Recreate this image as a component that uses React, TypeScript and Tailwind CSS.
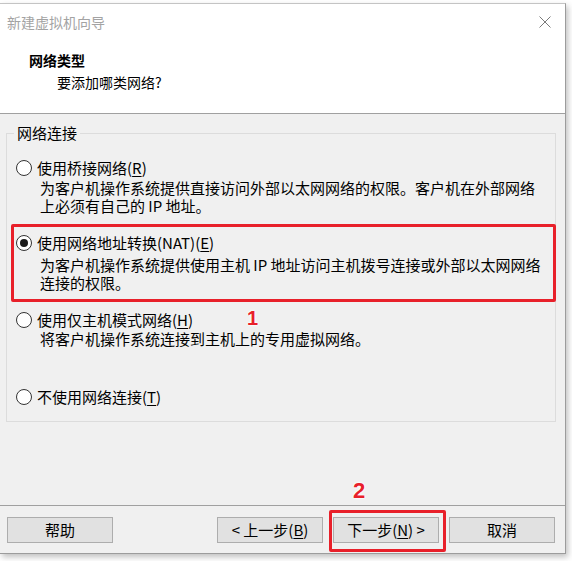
import React from "react";

const font = "font-['Microsoft_YaHei','Noto_Sans_CJK_SC',sans-serif]";

function Radio({ checked }: { checked?: boolean }) {
  return (
    <span className="flex h-4 w-4 shrink-0 items-center justify-center rounded-full border border-[#333333] bg-white">
      {checked && <span className="h-[8px] w-[8px] rounded-full bg-[#1a1a1a]" />}
    </span>
  );
}

function Option({
  checked,
  label,
  mn,
  suffix,
  className,
}: {
  checked?: boolean;
  label: string;
  mn: string;
  suffix?: string;
  className?: string;
}) {
  return (
    <div className={`flex h-[20px] items-center pl-[9px] ${className ?? ""}`}>
      <Radio checked={checked} />
      <span className="ml-[5px] text-[15px] leading-[20px] whitespace-nowrap text-black">
        {label}(<span className="underline underline-offset-2">{mn}</span>){suffix}
      </span>
    </div>
  );
}

function Btn({ children }: { children: React.ReactNode }) {
  return (
    <div className="flex h-[26px] w-[106px] items-center justify-center border border-[#adadad] bg-[#e1e1e1] text-[15px] leading-[20px] text-black whitespace-nowrap">
      {children}
    </div>
  );
}

export default function App() {
  return (
    <div className={`h-[561px] w-[572px] overflow-hidden bg-white pt-[3px] ${font}`}>
      <div className="relative flex h-[551px] w-[566px] flex-col border-t border-r border-b border-t-[#c4c4c4] border-r-[#9c9c9c] border-b-[#9c9c9c] bg-[#f0f0f0] shadow-[2px_3px_6px_rgba(0,0,0,0.25)]">
        {/* Header */}
        <div className="h-[110px] shrink-0 border-b border-[#a0a0a0] bg-white">
          <div className="flex h-[36px] items-center justify-between pl-[7px] pr-[14px]">
            <span className="text-[14px] leading-[20px] text-[#a3a3a3]">新建虚拟机向导</span>
            <svg width="12" height="12" viewBox="0 0 12 12" className="mr-0">
              <path d="M0.5 0.5 L11.5 11.5 M11.5 0.5 L0.5 11.5" stroke="#7a7a7a" strokeWidth="1" />
            </svg>
          </div>
          <div className="mt-[10px] pl-[29px] text-[14px] font-bold leading-[20px] text-black">网络类型</div>
          <div className="mt-[2px] pl-[57px] text-[14px] leading-[20px] text-black">要添加哪类网络?</div>
        </div>

        {/* Body */}
        <div className="h-[392px] shrink-0 border-b border-[#a0a0a0] pt-[19px]">
          <div className="relative ml-[6px] h-[289px] w-[550px] border border-[#dcdcdc]">
            <span className="absolute left-[7px] top-[-11px] bg-[#f0f0f0] px-[3px] text-[15px] leading-[20px] text-black">
              网络连接
            </span>
            <Option label="使用桥接网络" mn="R" className="mt-[24px]" />
            <div className="mt-[1px] pl-[33px] text-[15px] leading-[18px] text-black whitespace-nowrap">
              <div>为客户机操作系统提供直接访问外部以太网网络的权限。客户机在外部网络</div>
              <div>上必须有自己的 IP 地址。</div>
            </div>
            <Option checked label="使用网络地址转换(NAT)" mn="E" className="mt-[18px]" />
            <div className="mt-[3px] pl-[33px] text-[15px] leading-[18px] text-black whitespace-nowrap">
              <div>为客户机操作系统提供使用主机 IP 地址访问主机拨号连接或外部以太网网络</div>
              <div>连接的权限。</div>
            </div>
            <Option label="使用仅主机模式网络" mn="H" className="mt-[18px]" />
            <div className="mt-0 pl-[33px] text-[15px] leading-[18px] text-black whitespace-nowrap">
              <div>将客户机操作系统连接到主机上的专用虚拟网络。</div>
            </div>
            <Option label="不使用网络连接" mn="T" className="mt-[39px]" />
          </div>
        </div>

        {/* Footer */}
        <div className="flex h-[47px] shrink-0 items-start pl-[7px] pt-[11px]">
          <Btn>帮助</Btn>
          <div className="ml-[104px] flex gap-[10px]">
            <Btn>
              &lt; 上一步(<span className="underline underline-offset-2">B</span>)
            </Btn>
            <Btn>
              下一步(<span className="underline underline-offset-2">N</span>) &gt;
            </Btn>
            <Btn>取消</Btn>
          </div>
        </div>

        {/* Annotations */}
        <div className="pointer-events-none absolute left-[11px] top-[220px] h-[78px] w-[545px] rounded-[2px] border-[3px] border-[#e8202a]" />
        <div className="pointer-events-none absolute left-[329px] top-[506px] h-[42px] w-[117px] rounded-[2px] border-[3px] border-[#e8202a]" />
        <span className="absolute left-[247px] top-[304px] font-['Liberation_Sans',sans-serif] text-[20px] font-bold leading-[20px] text-[#e8202a] [text-shadow:0_0_2px_#fff,0_0_2px_#fff,0_0_3px_#fff]">
          1
        </span>
        <span className="absolute left-[353px] top-[476px] font-['Liberation_Sans',sans-serif] text-[22px] font-bold leading-[22px] text-[#e8202a] [text-shadow:0_0_2px_#fff,0_0_2px_#fff,0_0_3px_#fff]">
          2
        </span>
      </div>
    </div>
  );
}
